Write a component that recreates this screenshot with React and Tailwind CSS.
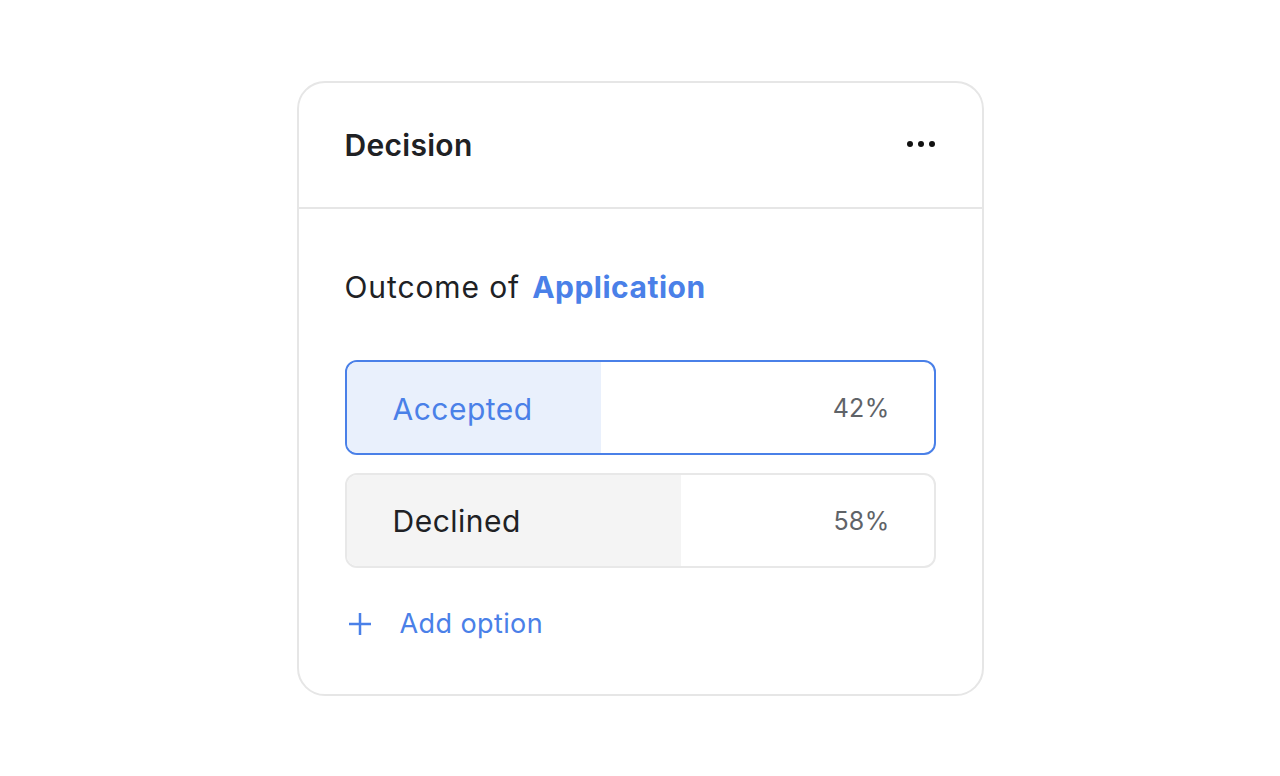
import React from 'react';

const options = [
  { label: 'Accepted', pct: 42, fill: 254, selected: true },
  { label: 'Declined', pct: 58, fill: 334, selected: false },
];

export default function App() {
  return (
    <div className="w-[1280px] h-[776px] bg-white flex justify-center pt-[81px]" style={{ fontFamily: 'Inter, "Liberation Sans", sans-serif' }}>
      <div className="w-[687px] h-[615px] border-2 border-[#e6e6e6] rounded-[28px] flex flex-col">
        <div className="h-[126px] flex items-center justify-between pl-[46px] pr-[46px] border-b-2 border-[#e6e6e6]">
          <h2 className="text-[30px] font-semibold text-[#202124] tracking-[0.3px]">Decision</h2>
          <svg width="30" height="8" viewBox="0 0 30 8" className="mt-[-2px]">
            <circle cx="4" cy="4" r="3" fill="#111" />
            <circle cx="15" cy="4" r="3" fill="#111" />
            <circle cx="26" cy="4" r="3" fill="#111" />
          </svg>
        </div>

        <div className="px-[46px] flex flex-col">
          <p className="mt-[60px] h-[36px] flex items-center text-[30px] text-[#202124] tracking-[0.9px]">
            Outcome of <span className="ml-[12px] font-bold text-[#4a80e8] tracking-[0.5px]">Application</span>
          </p>

          <div className="mt-[55px] flex flex-col gap-[18px]">
            {options.map(o => (
              <div
                key={o.label}
                className={
                  o.selected
                    ? 'relative h-[95px] rounded-[12px] border-2 border-[#4a80e8] overflow-hidden flex items-center justify-between pl-[46px] pr-[44px] pt-[3px]'
                    : 'relative h-[95px] rounded-[12px] border-2 border-[#e8e8e8] overflow-hidden flex items-center justify-between pl-[46px] pr-[44px] pt-[2px]'
                }
              >
                <div
                  className={o.selected ? 'absolute inset-y-0 left-0 bg-[#e9f0fc]' : 'absolute inset-y-0 left-0 bg-[#f4f4f4]'}
                  style={{ width: `${o.fill}px` }}
                />
                <span className={o.selected ? 'relative text-[30px] tracking-[0.5px] text-[#4a80e8]' : 'relative text-[30px] tracking-[0.5px] text-[#202124]'}>{o.label}</span>
                <span className="relative text-[25px] tracking-[0.3px] text-[#5f6368]">{o.pct}%</span>
              </div>
            ))}
          </div>

          <button className="mt-[38px] flex items-center gap-[28px] text-[#4a80e8] text-[27px] tracking-[0.4px] h-[36px] pl-[3px]">
            <svg width="24" height="24" viewBox="0 0 24 24" fill="none" stroke="#4a80e8" strokeWidth="2.5">
              <path d="M12 1v22M1 12h22" />
            </svg>
            Add option
          </button>
        </div>
      </div>
    </div>
  );
}
